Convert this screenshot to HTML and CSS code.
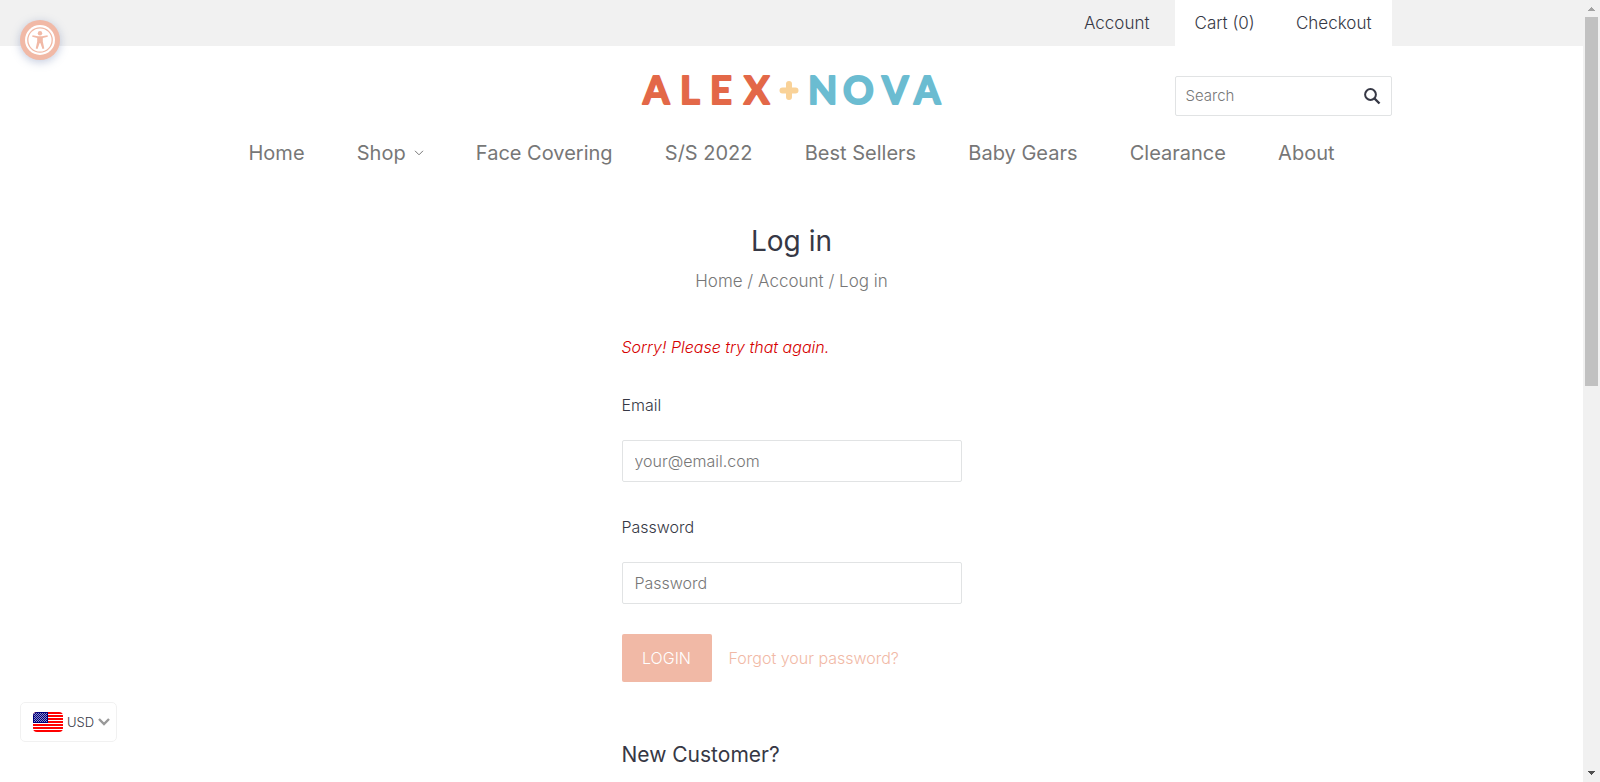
FILE: index.html
```html
<!DOCTYPE html>
<html lang="en">
<head>
<meta charset="utf-8">
<meta name="viewport" content="width=device-width, initial-scale=1">
<title>Log in – Alex + Nova</title>
<link rel="stylesheet" href="styles.css">
</head>
<body>
<div class="page">
  <div class="toolbar">
    <div class="container toolbar-inner">
      <a class="toolbar-account" href="#">Account</a>
      <div class="toolbar-cart">
        <a href="#">Cart (0)</a>
        <a href="#">Checkout</a>
      </div>
    </div>
  </div>

  <header class="container header">
    <a class="logo" href="#" aria-label="Alex + Nova">
      <svg width="302" height="32" viewBox="0 0 302 32" aria-hidden="true">
        <g class="logo-text">
          <text class="logo-alex" y="28" x="2 39 69 103">ALEX</text>
          <text class="logo-nova" y="28" x="167 202 241 273">NOVA</text>
        </g>
        <path class="logo-plus" d="M148 8v13M141.500 14.500h13"/>
      </svg>
    </a>
    <form class="search">
      <input type="search" placeholder="Search" aria-label="Search">
      <button type="submit" aria-label="Submit search">
        <svg width="18" height="18" viewBox="0 0 18 18" fill="none" stroke="currentColor"><circle cx="7.500" cy="7.500" r="5.400" stroke-width="2"/><path d="M11.500 11.500l5 5" stroke-width="2.400"/></svg>
      </button>
    </form>
  </header>

  <nav class="container nav" aria-label="Main">
    <a href="#">Home</a>
    <a href="#" class="nav-shop">Shop <svg width="10" height="6" viewBox="0 0 10 6" fill="none" stroke="currentColor"><path d="M1 .8l4 4 4-4"/></svg></a>
    <a href="#">Face Covering</a>
    <a href="#">S/S 2022</a>
    <a href="#">Best Sellers</a>
    <a href="#">Baby Gears</a>
    <a href="#">Clearance</a>
    <a href="#">About</a>
  </nav>

  <main class="main">
    <h1>Log in</h1>
    <div class="breadcrumbs"><a href="#">Home</a> / <a href="#">Account</a> / Log in</div>
    <form class="login">
      <p class="error">Sorry! Please try that again.</p>
      <div class="field">
        <label for="email">Email</label>
        <input id="email" type="email" placeholder="your@email.com">
      </div>
      <div class="field">
        <label for="password">Password</label>
        <input id="password" type="password" placeholder="Password">
      </div>
      <div class="actions">
        <button type="submit">LOGIN</button>
        <a href="#">Forgot your password?</a>
      </div>
      <h2>New Customer?</h2>
    </form>
  </main>
</div>

<button class="accessibility" type="button" aria-label="Accessibility menu">
  <svg width="40" height="40" viewBox="0 0 40 40" fill="none">
    <circle cx="20" cy="20" r="15" fill="#fff"/>
    <circle cx="20" cy="20" r="12.200" stroke="#f1b9a6" stroke-width="1.300"/>
    <g fill="#f1b9a6"><circle cx="20" cy="13.300" r="2.200"/><path d="M12.500 15.200l5.500 1h4l5.500-1 .3 1.500-5 1.300v3.500l1.500 7-1.800.5-2.200-6h-.6l-2.200 6-1.800-.5 1.500-7V18l-5-1.300z"/></g>
  </svg>
</button>

<button class="currency" type="button">
  <svg class="flag" width="30" height="20" viewBox="0 0 30 20">
    <defs><pattern id="stars" width="2" height="2" patternUnits="userSpaceOnUse"><rect width="2" height="2" fill="#00007c"/><path d="M0 0h1v1H0zM1 1h1v1H1z" fill="#8c8cc8"/></pattern></defs>
    <rect width="30" height="20" fill="#fff"/>
    <path d="M0 1h30M0 4h30M0 7h30M0 10h30M0 13h30M0 16h30M0 19h30" stroke="#f00" stroke-width="2"/>
    <rect width="15" height="11" fill="#00007c"/><rect x="1" y="1" width="13" height="9" fill="url(#stars)"/>
  </svg>
  <span>USD</span>
  <svg width="12" height="8" viewBox="0 0 12 8" fill="none" stroke="#999" stroke-width="2.400"><path d="M1 1l5 5 5-5"/></svg>
</button>

<div class="scrollbar" aria-hidden="true">
  <svg width="7" height="4" viewBox="0 0 7 4" fill="#a3a3a3"><path d="M3 0h1v1h1v1h1v1h1v1H0V3h1V2h1V1h1z"/></svg>
  <div class="scrollbar-thumb"></div>
  <svg width="7" height="4" viewBox="0 0 7 4" fill="#505050"><path d="M0 0h7v1H6v1H5v1H4v1H3V3H2V2H1V1H0z"/></svg>
</div>
</body>
</html>
```
FILE: styles.css
```css
* { box-sizing: border-box; }

body {
  margin: 0;
  background: #fff;
  color: #363845;
  font: 300 16px/24px Inter, "Liberation Sans", sans-serif;
}

a { color: inherit; text-decoration: none; }
input, button { font: inherit; color: inherit; }
button { cursor: pointer; border: 0; }
svg { flex-shrink: 0; }

.page { padding-right: 17px; }
.container { max-width: 1200px; margin: 0 auto; }

.toolbar { background: #f1f1f1; }
.toolbar-inner {
  display: flex;
  justify-content: flex-end;
  font-size: 17px;
  line-height: 46px;
}
.toolbar-account { padding: 0 25px; }
.toolbar-cart {
  display: flex;
  justify-content: space-between;
  width: 217px;
  padding: 0 20px;
  background: #fff;
}

.header {
  display: grid;
  grid-template-columns: 1fr auto 1fr;
  padding-top: 30px;
}
.logo { grid-column: 2; height: 32px; }
.logo svg { display: block; overflow: visible; }
.logo-text {
  font: 700 38px Lato, sans-serif;
  stroke-width: 2;
  stroke-linejoin: round;
}
.logo-alex { fill: #e36848; stroke: #e36848; }
.logo-nova { fill: #6bbcd1; stroke: #6bbcd1; }
.logo-plus { stroke: #f9d298; stroke-width: 6; stroke-linecap: round; }

.search {
  justify-self: end;
  display: flex;
  width: 217px;
  height: 40px;
  border: 1px solid #e1e3e4;
  border-radius: 2px;
}
.search input {
  flex: 1;
  min-width: 0;
  padding: 0 10px;
  border: 0;
  background: none;
  font-size: 15px;
}
.search button {
  display: flex;
  align-items: center;
  padding: 0 10px;
  background: none;
}
::placeholder { color: #777; opacity: 1; }

.nav {
  display: flex;
  justify-content: space-between;
  padding: 22px 57px 0;
  color: #777;
  font-size: 20px;
  font-weight: 400;
  line-height: 30px;
}
.nav-shop { display: flex; align-items: center; gap: 8px; }

.main { padding-top: 52px; }
h1, h2 { margin: 0; font-weight: 400; }
h1 { font-size: 28px; line-height: 42px; text-align: center; }
.breadcrumbs { margin-top: 7px; color: #777; font-size: 17px; text-align: center; }

.login { width: 340px; margin: 42px auto 0; }
.error { margin: 0 0 34px; color: #d60000; font-style: italic; }
.field { display: flex; flex-direction: column; gap: 23px; margin-bottom: 33px; }
.field input {
  height: 42px;
  padding: 0 12px;
  border: 1px solid #e1e3e4;
  border-radius: 2px;
  background: #fff;
}
.field:nth-of-type(2) { margin-bottom: 30px; }
.actions { display: flex; align-items: center; gap: 17px; color: #f1b9a6; }
.actions button {
  width: 90px;
  height: 48px;
  border-radius: 2px;
  background: #f1b9a6;
  color: #fff;
}
h2 { margin-top: 58px; font-size: 21px; line-height: 30px; }

.accessibility {
  position: fixed;
  top: 20px;
  left: 20px;
  width: 40px;
  height: 40px;
  padding: 0;
  border-radius: 50%;
  background: #f1b9a6;
  box-shadow: 0 2px 10px #6478aa66;
}
.accessibility svg { display: block; }

.currency {
  position: fixed;
  left: 20px;
  bottom: 40px;
  display: flex;
  align-items: center;
  gap: 4px;
  width: 97px;
  height: 40px;
  padding: 0 0 0 12px;
  border: 1px solid #f1f1f1;
  border-radius: 5px;
  background: #fff;
  font-size: 13px;
}
.flag { border-radius: 4px; }

.scrollbar {
  position: fixed;
  top: 0;
  right: 0;
  bottom: 0;
  display: flex;
  flex-direction: column;
  align-items: center;
  width: 17px;
  padding: 7px 0;
  background: #f1f1f1;
}
.scrollbar-thumb { width: 13px; height: 48%; margin: 6px 0 auto; background: #c1c1c1; }
```
